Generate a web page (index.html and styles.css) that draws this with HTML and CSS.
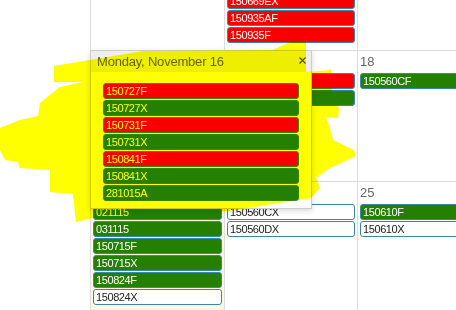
FILE: index.html
```html
<!DOCTYPE html>
<html lang="en">
<head>
  <meta charset="UTF-8">
  <meta name="viewport" content="width=device-width, initial-scale=1.0">
  <title>Calendar</title>
  <link rel="stylesheet" href="styles.css">
</head>
<body>
  <div class="screen">
    <div class="calendar">
      <!-- previous week, only its lower part is in view -->
      <div class="week week-partial">
        <div class="day"></div>
        <div class="day">
          <div class="events">
            <div class="event event-red">150669EX</div>
            <div class="event event-red">150935AF</div>
            <div class="event event-red">150935F</div>
          </div>
        </div>
        <div class="day"></div>
      </div>

      <div class="week">
        <div class="day">
          <div class="day-num">16</div>
        </div>
        <div class="day">
          <div class="day-num">17</div>
          <div class="events">
            <div class="event event-red">150560AF</div>
            <div class="event event-green">150560AX</div>
          </div>
        </div>
        <div class="day">
          <div class="day-num">18</div>
          <div class="events">
            <div class="event event-green">150560CF</div>
          </div>
        </div>
      </div>

      <div class="week">
        <div class="day day-today">
          <div class="day-num">23</div>
          <div class="events">
            <div class="event event-green">021115</div>
            <div class="event event-green">031115</div>
            <div class="event event-green">150715F</div>
            <div class="event event-green">150715X</div>
            <div class="event event-green">150824F</div>
            <div class="event event-white">150824X</div>
          </div>
        </div>
        <div class="day">
          <div class="day-num">24</div>
          <div class="events">
            <div class="event event-white">150560CX</div>
            <div class="event event-white">150560DX</div>
          </div>
        </div>
        <div class="day">
          <div class="day-num">25</div>
          <div class="events">
            <div class="event event-green">150610F</div>
            <div class="event event-white">150610X</div>
          </div>
        </div>
      </div>
    </div>

    <div class="popover">
      <div class="popover-header">
        <span class="popover-title">Monday, November 16</span>
        <svg class="popover-close" width="7" height="7" viewBox="0 0 7 7">
          <path d="M0.5 0.5 L6.5 6.5 M6.5 0.5 L0.5 6.5" stroke="#555" stroke-width="1.2" fill="none"/>
        </svg>
      </div>
      <div class="popover-body">
        <div class="event event-red">150727F</div>
        <div class="event event-green">150727X</div>
        <div class="event event-red">150731F</div>
        <div class="event event-green">150731X</div>
        <div class="event event-red">150841F</div>
        <div class="event event-green">150841X</div>
        <div class="event event-green">281015A</div>
      </div>
    </div>

    <!-- highlighter mark drawn over the screenshot -->
    <svg class="highlight" width="456" height="310" viewBox="0 0 456 310">
      <path d="M54,66 L143,51 L273,50 L290,42 L306,42 L306,72 L331,70 L332,97 L339,108 L338,118 L326,117 L330,128 L333,140 L354,150 L356,156 L330,168 L316,178 L320,188 L311,198 L228,211 L150,214 L93,218 L76,222 L73,194 L50,192 L50,170 L20,168 L18,162 L5,160 L0,150 L0,128 L20,120 L38,116 L40,103 L60,87 L83,82 L54,82 Z" fill="#ffff00"/>
    </svg>
  </div>
</body>
</html>
```

FILE: styles.css
```css
* {
  box-sizing: border-box;
}

body {
  margin: 0;
  background: #fff;
  font-family: "Liberation Sans", Arial, sans-serif;
}

.screen {
  position: relative;
  width: 456px;
  height: 310px;
  overflow: hidden;
  background: #fff;
}

.calendar {
  width: 402px;
  margin-left: 90px;
  margin-top: -29px;
  border-left: 1px solid #ddd;
}

.week {
  display: grid;
  grid-template-columns: 134px 133px 133px;
  height: 131px;
  border-bottom: 1px solid #ddd;
}

.week-partial {
  height: 80px;
}

.day {
  border-right: 1px solid #ddd;
}

.day-today {
  background: #fcf8e3;
}

.day-num {
  padding: 3px 2px 3px;
  font-size: 13px;
  line-height: 16px;
  color: #666;
}

.week-partial .events {
  padding-top: 22px;
}

.event {
  height: 16px;
  margin: 0 2px 1px;
  padding: 0 2px;
  border: 1px solid #3a87ad;
  border-radius: 3px;
  font-size: 11px;
  line-height: 14px;
  letter-spacing: -0.4px;
  color: #fff;
  white-space: nowrap;
  overflow: hidden;
}

.event-red {
  background: #f80000;
}

.event-green {
  background: #257f00;
}

.event-white {
  background: #fff;
  color: #222;
}

/* "more events" popover */
.popover {
  position: absolute;
  left: 90px;
  top: 50px;
  width: 222px;
  height: 159px;
  background: #fff;
  border: 1px solid #ccc;
  box-shadow: 0 2px 6px rgba(0, 0, 0, 0.15);
}

.popover-header {
  display: flex;
  justify-content: space-between;
  align-items: flex-start;
  height: 21px;
  padding: 3px 5px 0 6px;
  background: #eee;
}

.popover-title {
  font-size: 13px;
  line-height: 16px;
  letter-spacing: -0.2px;
  color: #666;
}

.popover-close {
  margin-top: 3px;
}

.popover-body {
  padding: 11px 10px 6px;
}

.highlight {
  position: absolute;
  top: 0;
  left: 0;
  mix-blend-mode: multiply;
  pointer-events: none;
}
```
